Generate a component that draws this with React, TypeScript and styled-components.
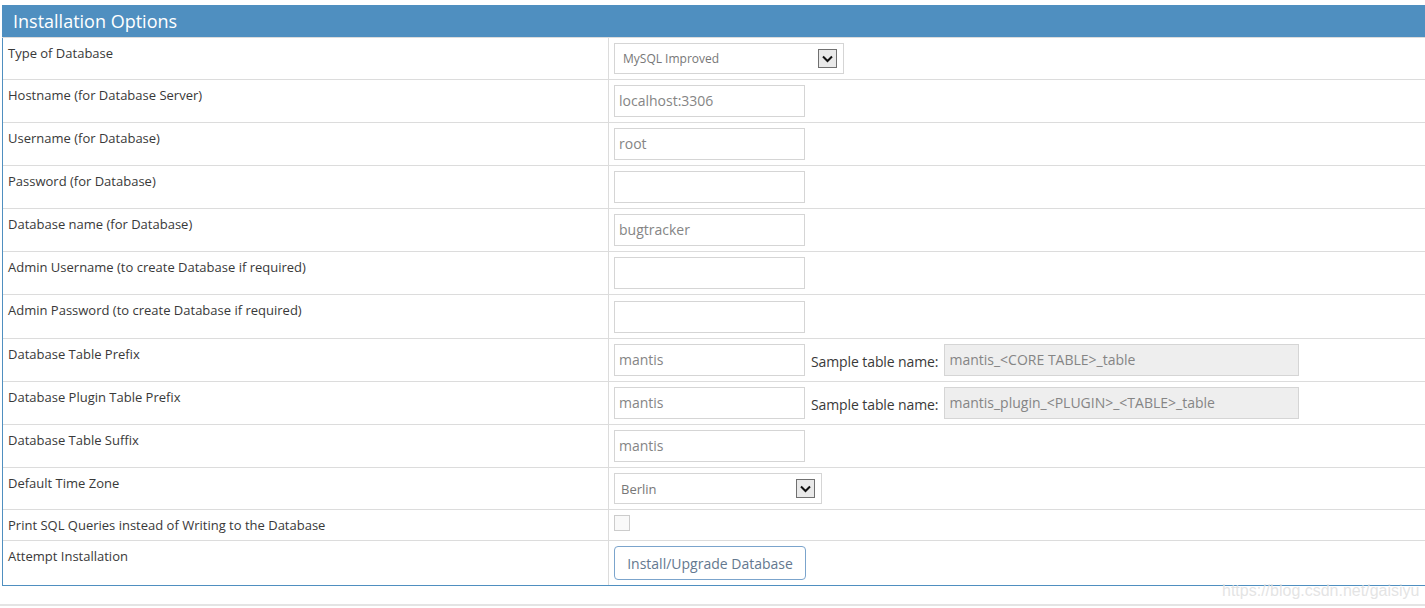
import React from "react";
import styled, { createGlobalStyle } from "styled-components";

const Global = createGlobalStyle`
  html, body { margin: 0; padding: 0; background: #fff; overflow: hidden; }
  body { font-family: "Open Sans", "Noto Sans", sans-serif; color: #393939; }
  * { box-sizing: border-box; }
`;

const Page = styled.div`
  position: relative;
  width: 1425px;
  height: 608px;
  padding-top: 5px;
`;

const Panel = styled.div`
  margin-left: 2px;
  width: 1440px;
  border-left: 1px solid #4f8fc0;
  border-bottom: 1px solid #4f8fc0;
`;

const Header = styled.div`
  background: #4f8fc0;
  color: #fff;
  height: 33px;
  margin-left: -1px;
  padding: 3px 0 0 11px;
  font-size: 18px;
  line-height: 26px;
  border-bottom: 1px solid #dcdcdc;
`;

const Row = styled.div<{ first?: boolean }>`
  display: grid;
  grid-template-columns: 606px 1fr;
  border-top: ${(p) => (p.first ? "none" : "1px solid #dcdcdc")};
`;

const Label = styled.div`
  padding: 5px 5px;
  font-size: 13px;
  line-height: 20px;
  color: #393939;
  border-right: 1px solid #dcdcdc;
`;

const Cell = styled.div<{ pad?: number; top?: boolean }>`
  display: flex;
  align-items: ${(p) => (p.top ? "flex-start" : "center")};
  gap: 6px;
  padding: ${(p) => p.pad ?? 5}px 5px;
`;

const TextInput = styled.input<{ w?: number }>`
  width: ${(p) => p.w ?? 191}px;
  height: 32px;
  border: 1px solid #d5d5d5;
  padding: 4px 4px 6px;
  font-family: "Open Sans", sans-serif;
  font-size: 14px;
  color: #858585;
  background: ${(p) => (p.disabled ? "#eeeeee" : "#fff")};
  outline: none;
  border-radius: 0;
`;

const SampleLabel = styled.span`
  font-size: 14px;
  color: #393939;
  margin-top: 3px;
  letter-spacing: -0.1px;
`;

const SelectBox = styled.div<{ w: number; small?: boolean }>`
  width: ${(p) => p.w}px;
  height: ${(p) => (p.small ? 31 : 31)}px;
  border: 1px solid #d5d5d5;
  display: flex;
  align-items: center;
  justify-content: space-between;
  padding: 0 6px 0 ${(p) => (p.small ? 8 : 6)}px;
  font-size: ${(p) => (p.small ? 12 : 13)}px;
  color: #777;
`;

const ArrowBox = styled.span`
  width: 19px;
  height: 19px;
  background: #e9e9e9;
  border: 1px solid #707070;
  display: flex;
  align-items: center;
  justify-content: center;
`;

const Check = styled.span`
  width: 16px;
  height: 16px;
  border: 1px solid #ccc;
  background: #f9f9f9;
  display: block;
`;

const Button = styled.button`
  width: 192px;
  height: 34px;
  background: #fff;
  border: 1px solid #7ba4cc;
  border-radius: 4px;
  font-family: "Open Sans", sans-serif;
  font-size: 14px;
  color: #64788f;
  padding: 0;
`;

const Footer = styled.div`
  margin-top: 18px;
  border-top: 2px solid #e4e4e4;
`;

const Watermark = styled.div`
  position: absolute;
  left: 1222px;
  top: 582px;
  font-family: "Liberation Sans", Arial, sans-serif;
  font-size: 16px;
  color: rgba(225, 225, 225, 0.9);
`;

const Arrow = () => (
  <ArrowBox>
    <svg width="11" height="8" viewBox="0 0 11 8">
      <path d="M1 1.5 L5.5 6 L10 1.5" fill="none" stroke="#111" strokeWidth="2" />
    </svg>
  </ArrowBox>
);

const inputs: { label: string; value: string; sample?: string; tall?: boolean }[] = [
  { label: "Hostname (for Database Server)", value: "localhost:3306" },
  { label: "Username (for Database)", value: "root" },
  { label: "Password (for Database)", value: "" },
  { label: "Database name (for Database)", value: "bugtracker" },
  { label: "Admin Username (to create Database if required)", value: "" },
  { label: "Admin Password (to create Database if required)", value: "", tall: true },
  { label: "Database Table Prefix", value: "mantis", sample: "mantis_<CORE TABLE>_table" },
  { label: "Database Plugin Table Prefix", value: "mantis", sample: "mantis_plugin_<PLUGIN>_<TABLE>_table" },
  { label: "Database Table Suffix", value: "mantis" },
];

export default function App() {
  return (
    <Page>
      <Global />
      <Panel>
        <Header>Installation Options</Header>
        <Row first>
          <Label>Type of Database</Label>
          <Cell>
            <SelectBox w={230} small>
              <span>MySQL Improved</span>
              <Arrow />
            </SelectBox>
          </Cell>
        </Row>
        {inputs.map((r) => (
          <Row key={r.label}>
            <Label>{r.label}</Label>
            <Cell pad={r.tall ? 5.5 : 5}>
              <TextInput readOnly value={r.value} />
              {r.sample && (
                <>
                  <SampleLabel>Sample table name:</SampleLabel>
                  <TextInput w={355} disabled value={r.sample} />
                </>
              )}
            </Cell>
          </Row>
        ))}
        <Row>
          <Label>Default Time Zone</Label>
          <Cell>
            <SelectBox w={208}>
              <span>Berlin</span>
              <Arrow />
            </SelectBox>
          </Cell>
        </Row>
        <Row>
          <Label>Print SQL Queries instead of Writing to the Database</Label>
          <Cell top>
            <Check />
          </Cell>
        </Row>
        <Row>
          <Label>Attempt Installation</Label>
          <Cell>
            <Button>Install/Upgrade Database</Button>
          </Cell>
        </Row>
      </Panel>
      <Footer />
      <Watermark>https://blog.csdn.net/gaisiyu</Watermark>
    </Page>
  );
}
